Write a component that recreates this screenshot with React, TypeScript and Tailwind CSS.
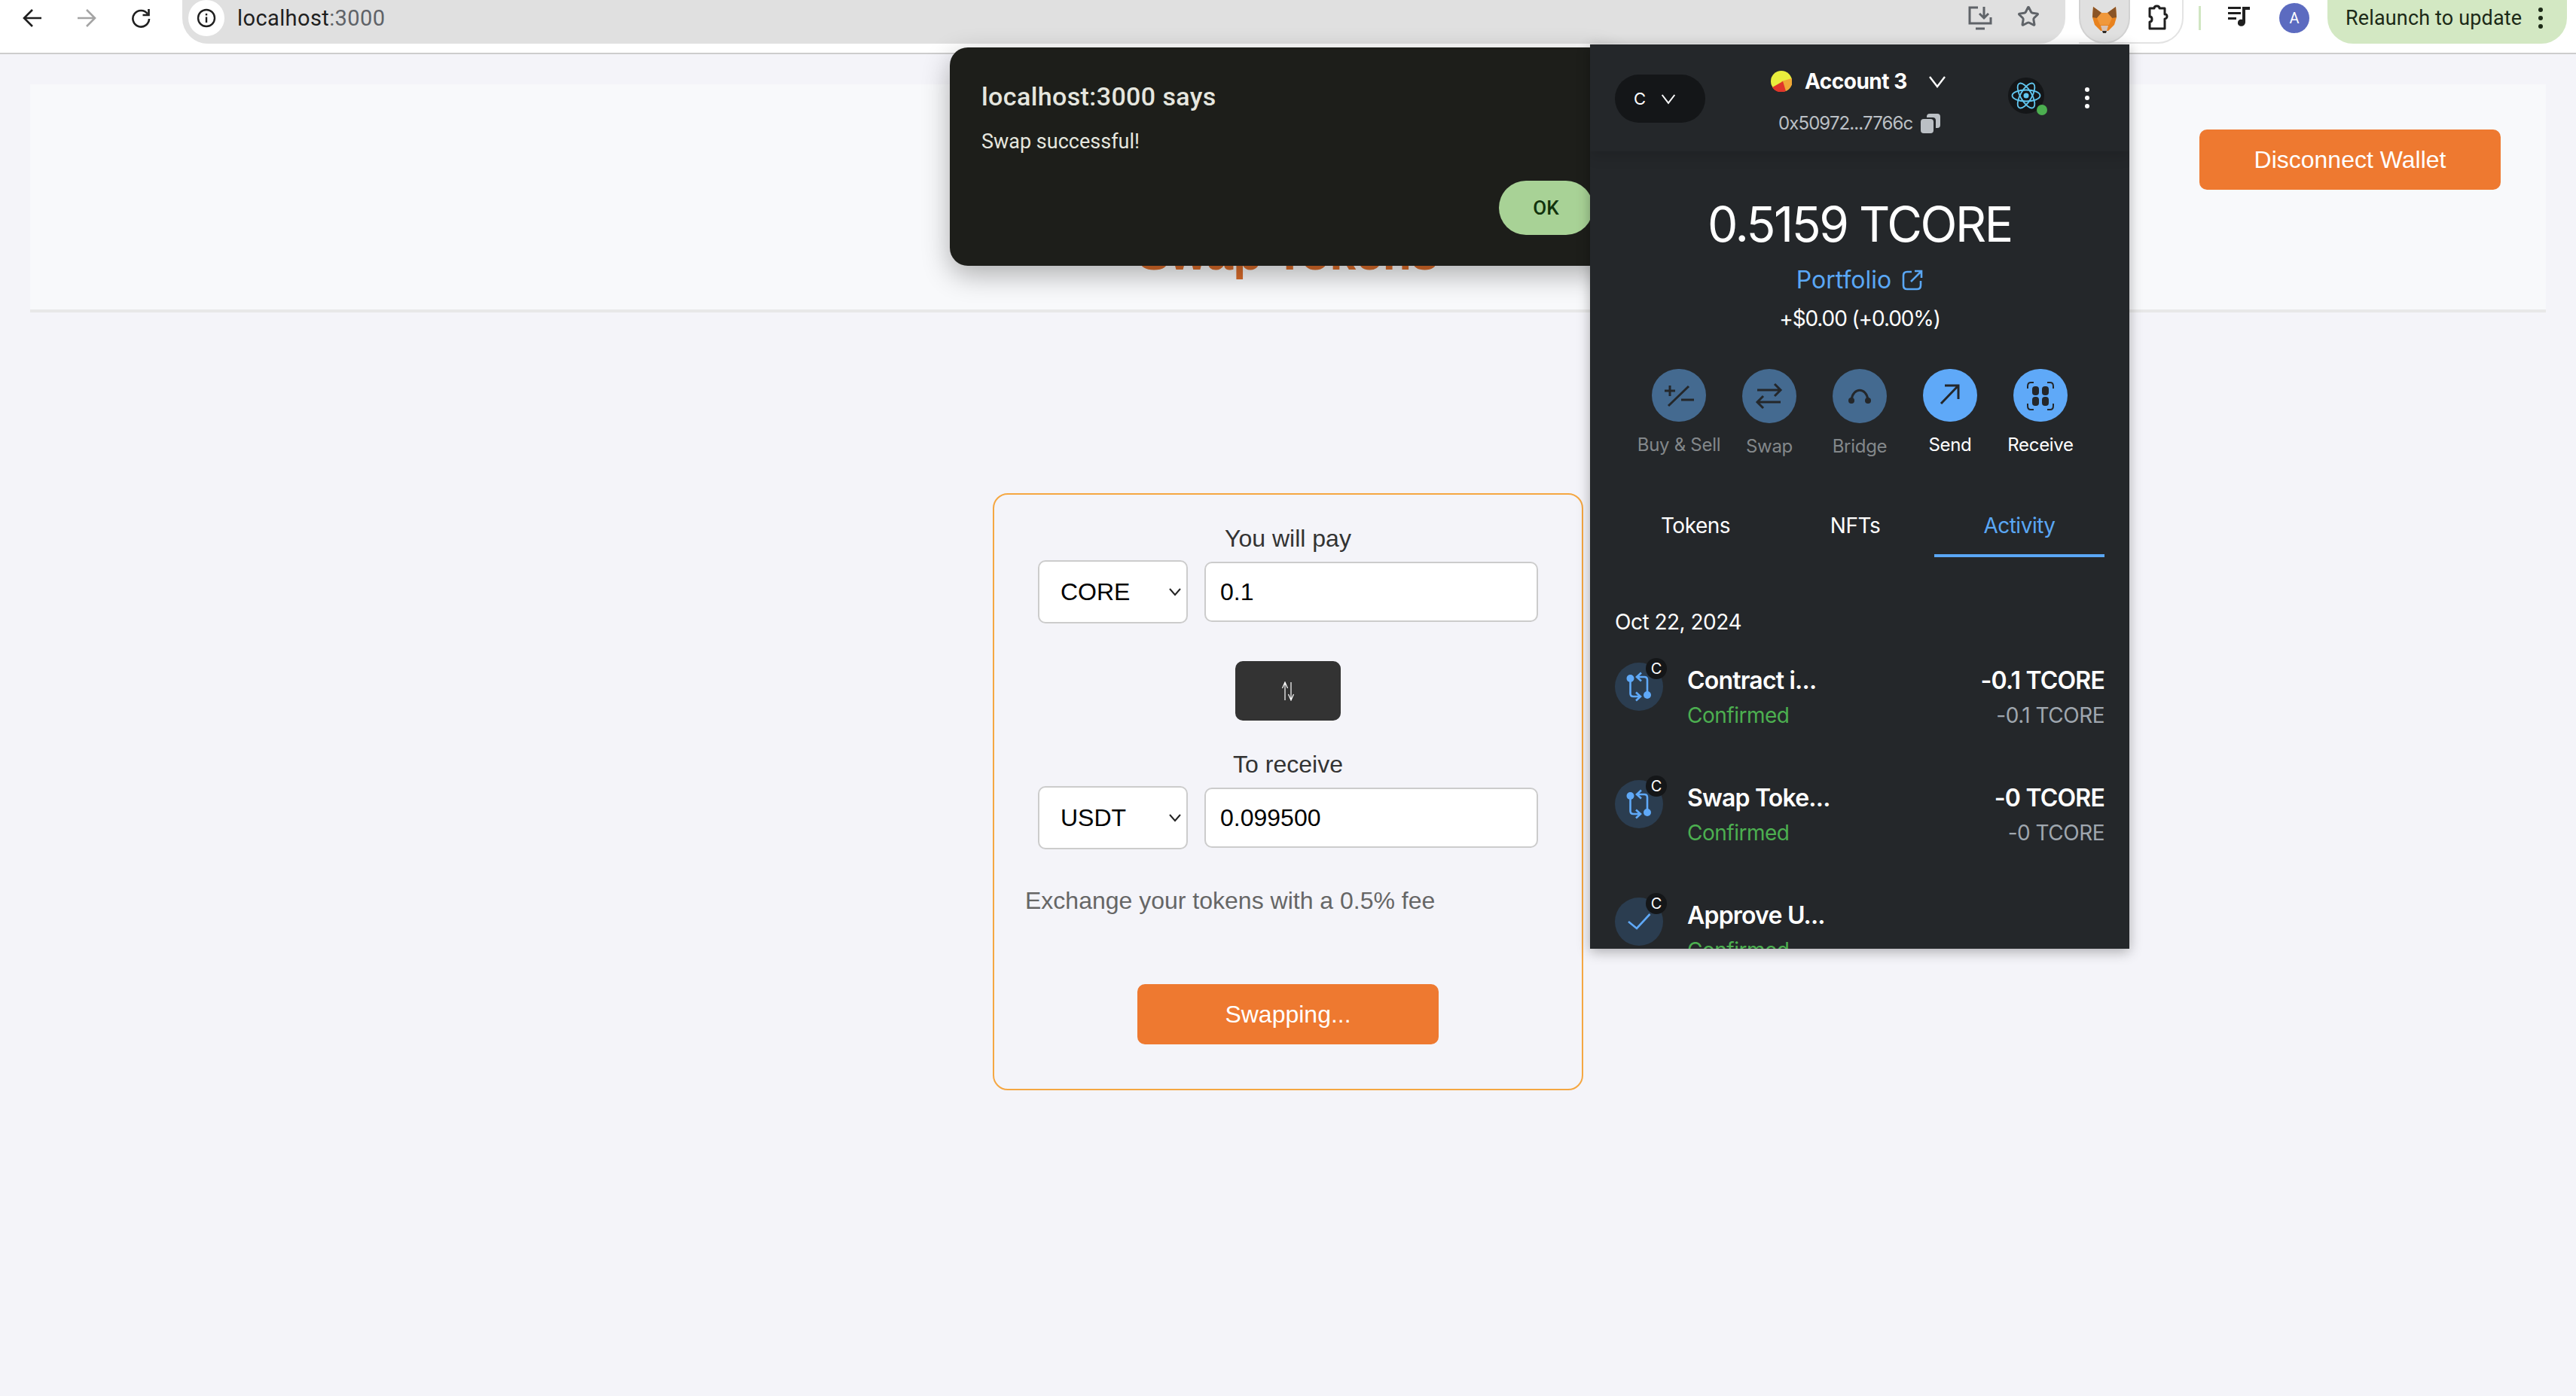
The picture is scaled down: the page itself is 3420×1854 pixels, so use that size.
import { Star } from "lucide-react";

const mmFont = "font-['Inter','Liberation_Sans',sans-serif]";

function BackIcon({ color }: { color: string }) {
  return (
    <svg width="28" height="28" viewBox="0 0 28 28" fill="none" stroke={color} strokeWidth="2.6">
      <path d="M26 14H4M14 3 3 14l11 11" />
    </svg>
  );
}

function ChromeBar() {
  return (
    <div className="h-[72px] shrink-0 border-b-2 border-[#cdcdcd] bg-white flex items-start overflow-hidden font-['Roboto',sans-serif]">
      <div className="flex items-center h-[48px] pl-[29px] gap-[44px] w-[242px]">
        <BackIcon color="#1f1f1f" />
        <div className="rotate-180">
          <BackIcon color="#a4a4a4" />
        </div>
        <svg width="28" height="28" viewBox="0 0 28 28" fill="none" stroke="#1f1f1f" strokeWidth="2.6">
          <path d="M23 8.5A10.8 10.8 0 1 0 25 15" />
          <path d="M24.5 2v8h-8" />
        </svg>
      </div>
      <div className="w-[500px] flex-none h-[58px] rounded-bl-[34px] bg-[#e0e0e0] flex items-start pl-[8px]">
        <div className="w-[48px] h-[48px] rounded-full bg-white flex items-center justify-center">
          <svg width="26" height="26" viewBox="0 0 26 26" fill="none" stroke="#1f1f1f" strokeWidth="2.4">
            <circle cx="13" cy="13" r="11" />
            <path d="M13 11.5V19M13 7v2.6" />
          </svg>
        </div>
        <span className="ml-[17px] text-[29px] leading-[48px] text-[#1f1f1f] tracking-[0.4px]">
          localhost<span className="text-[#5f6368]">:3000</span>
        </span>
      </div>
      <div className="w-[2000px] flex-none h-[58px] rounded-br-[34px] bg-[#e0e0e0] flex items-start justify-end pt-[7px] pr-[34px] gap-[32px]">
        <svg width="34" height="34" viewBox="0 0 34 34" fill="none" stroke="#5f6368" strokeWidth="3">
          <path d="M14 3H3v21h28v-8M11 31h12" />
          <path d="M22 2v15M16 11l6 6 6-6" />
        </svg>
        <Star size={30} strokeWidth={2.4} color="#5f6368" />
      </div>
      <div className="ml-[18px] h-[58px] w-[139px] rounded-br-[34px] border-b-2 border-r-2 border-[#e3e3e3] flex items-start">
        <div className="w-[68px] h-[58px] rounded-b-[34px] bg-[#e0e0e0] border-b-2 border-x-2 border-[#d2d2d2] flex items-start justify-center">
          <svg width="34" height="38" viewBox="0 0 34 38" className="mt-[8px]">
            <path d="M2 1 13 9h8l11-8 1 14-3 10-8 8h-10l-8-8-3-10z" fill="#e8821e" />
            <path d="M2 1 13 9l-6 7-6-1zM32 1 21 9l6 7 6-1z" fill="#8a5426" />
            <path d="M7 16l6-7h8l6 7-4 9H11z" fill="#f0983b" />
            <path d="M12 26h10l-2 7h-6z" fill="#d7c1b3" />
            <path d="M14 33h6l-1 3h-4z" fill="#2f2a26" />
          </svg>
        </div>
        <svg width="32" height="34" viewBox="0 0 32 34" fill="none" stroke="#1f1f1f" strokeWidth="3" className="ml-[22px] mt-[6px]">
          <path d="M4 5h6c0-4 7-4 7 0h7v8c4-1 4 6 0 6v13H4v-9c4 0 4-7 0-7z" strokeLinejoin="round" />
        </svg>
      </div>
      <div className="ml-[20px] mt-[8px] w-[3px] h-[32px] bg-[#d0e6c2]" />
      <svg width="32" height="32" viewBox="0 0 32 32" className="ml-[35px] mt-[6px]" fill="#1f1f1f">
        <path d="M1 3h17v3H1zM1 10h17v3H1zM1 17h11v3H1zM20 3h10v4h-6v16c0 8-11 7-10 1 0-4 4-5 6-4z" />
      </svg>
      <div className="ml-[37px] mt-[4px] w-[40px] h-[40px] rounded-full bg-[#5c6bc0] text-white text-[20px] flex items-center justify-center">A</div>
      <div className="ml-[24px] w-[318px] h-[58px] rounded-b-[34px] bg-[#d3e8c3] flex items-start pl-[24px] text-[27px] leading-[48px] text-[#1c2a17] tracking-[0.15px]">
        <span>Relaunch to update</span>
        <span className="ml-[22px] mt-[10px] flex flex-col gap-[5px]">
          <i className="block w-[6px] h-[6px] rounded-full bg-[#1c2a17]" />
          <i className="block w-[6px] h-[6px] rounded-full bg-[#1c2a17]" />
          <i className="block w-[6px] h-[6px] rounded-full bg-[#1c2a17]" />
        </span>
      </div>
    </div>
  );
}

function TokenRow({ token, value, selectMargin }: { token: string; value: string; selectMargin: string }) {
  return (
    <div className={`flex items-center gap-[22px] ${selectMargin}`}>
      <div className="relative">
        <select
          defaultValue={token}
          className="appearance-none w-[199px] h-[84px] pl-[28px] rounded-[10px] border-2 border-[#cccccc] bg-white text-[32px] text-black outline-none"
        >
          <option>{token}</option>
        </select>
        <svg width="18" height="12" viewBox="0 0 18 12" fill="none" stroke="#222" strokeWidth="2" className="absolute right-[8px] top-[36px]">
          <path d="M2 2l7 8 7-8" />
        </svg>
      </div>
      <input
        readOnly
        value={value}
        className="w-[443px] h-[80px] pl-[19px] rounded-[10px] border-2 border-[#cccccc] bg-white text-[32px] text-black outline-none"
      />
    </div>
  );
}

function SwapCard() {
  return (
    <div className="mx-auto mt-[240px] w-[784px] h-[793px] rounded-[20px] border-2 border-[#f5a742] pt-[40px] flex flex-col items-center">
      <label className="text-[32px] leading-[36px] text-[#333]">You will pay</label>
      <TokenRow token="CORE" value="0.1" selectMargin="mt-[11px]" />
      <button className="mt-[50px] w-[140px] h-[79px] rounded-[10px] bg-[#333] text-white flex items-center justify-center">
        <svg width="18" height="26" viewBox="0 0 18 26" fill="none" stroke="#fff" strokeWidth="1.2">
          <path d="M5 25V2M1.5 9 5 1l3.500 8M13 1v23M9.500 17 13 25l3.500-8" />
        </svg>
      </button>
      <label className="mt-[40px] text-[32px] leading-[36px] text-[#333]">To receive</label>
      <TokenRow token="USDT" value="0.099500" selectMargin="mt-[11px]" />
      <p className="mt-[50px] self-start pl-[41px] text-[32px] leading-[36px] text-[#666]">Exchange your tokens with a 0.5% fee</p>
      <button className="mt-[93px] w-[400px] h-[80px] rounded-[10px] bg-[#ee7930] text-white text-[32px]">Swapping...</button>
    </div>
  );
}

function AlertDialog() {
  return (
    <div className="absolute left-[1261px] top-[63px] w-[880px] h-[290px] rounded-[24px] bg-[#1d1e1a] shadow-[0_12px_36px_rgba(0,0,0,0.3)] pt-[45px] pl-[42px] pr-[26px] font-['Roboto',sans-serif]">
      <div className="text-[34px] leading-[40px] font-medium tracking-[0.4px] text-[#e5e6df]">localhost:3000 says</div>
      <div className="mt-[24px] text-[27px] leading-[32px] text-[#e5e6df]">Swap successful!</div>
      <div className="mt-[36px] flex justify-end">
        <button className="w-[125px] h-[72px] rounded-full bg-[#a8d296] text-[26px] font-medium text-[#12330d]">OK</button>
      </div>
    </div>
  );
}

function Chevron({ size, color }: { size: number; color: string }) {
  return (
    <svg width={size} height={size} viewBox="0 0 24 24" fill="none" stroke={color} strokeWidth="2.4">
      <path d="M2 6l10 13L22 6" />
    </svg>
  );
}

const actions = [
  {
    label: "Buy & Sell",
    tall: false,
    icon: <path d="M24 22v14M17 29h14M49 23 22 49M39 41h17" />,
  },
  {
    label: "Swap",
    tall: true,
    icon: <path d="M20 28h31M43 20l8 8-8 8M51 44H20M28 36l-8 8 8 8" />,
  },
  {
    label: "Bridge",
    tall: true,
    icon: null,
  },
  {
    label: "Send",
    tall: false,
    icon: <path d="M24 46 47 22M29 22h18v18" />,
  },
  {
    label: "Receive",
    tall: false,
    icon: null,
  },
];

function ActionButton({ index }: { index: number }) {
  const a = actions[index];
  const dim = index < 3;
  return (
    <div className="w-[120px] flex flex-col items-center">
      <div className={`w-[72px] ${a.tall ? "h-[72px]" : "h-[70px]"} rounded-full ${dim ? "bg-[#446a90]" : "bg-[#5fa9f8]"}`}>
        <svg width="72" height="72" viewBox="0 0 72 72" fill="none" stroke="#24272a" strokeWidth="3">
          {a.icon}
          {a.label === "Bridge" && (
            <>
              <path d="M25 41c2-17 20-17 22 0" />
              <circle cx="25" cy="42" r="4" fill="#24272a" stroke="none" />
              <circle cx="47" cy="42" r="4" fill="#24272a" stroke="none" />
            </>
          )}
          {a.label === "Receive" && (
            <>
              <rect x="25" y="23" width="9" height="12" rx="4" fill="#24272a" stroke="none" />
              <rect x="38" y="23" width="9" height="12" rx="4" fill="#24272a" stroke="none" />
              <rect x="25" y="37" width="9" height="12" rx="4" fill="#24272a" stroke="none" />
              <rect x="38" y="37" width="9" height="12" rx="4" fill="#24272a" stroke="none" />
              <path d="M27 18h-4q-4 0-4 5v3M45 18h4q4 0 4 5v3M27 54h-4q-4 0-4-5v-3M45 54h4q4 0 4-5v-3" strokeWidth="2" />
            </>
          )}
        </svg>
      </div>
      <div className={`mt-[15px] text-[24px] leading-[32px] tracking-[-0.3px] ${dim ? "text-[#83878a]" : "text-white"}`}>{a.label}</div>
    </div>
  );
}

function TxIcon({ kind }: { kind: "swap" | "check" }) {
  return (
    <div className="relative w-[64px] h-[64px] shrink-0 rounded-full bg-[#2b3d50]">
      <svg width="64" height="64" viewBox="0 0 64 64" fill="none" stroke="#5fa9f8" strokeWidth="2.6">
        {kind === "swap" ? (
          <>
            <circle cx="20.500" cy="21" r="5" fill="#5fa9f8" stroke="none" />
            <circle cx="43" cy="43" r="5" fill="#5fa9f8" stroke="none" />
            <path d="M20.500 24v17q0 4 4 4h9M28 39.500l6 5.500-6 5.500" />
            <path d="M43 40V23q0-4-4-4h-10M35 13.500 29 19l6 5.500" />
          </>
        ) : (
          <path d="M18 32l11 9 17.500-19" />
        )}
      </svg>
      <div className="absolute -right-[5px] -top-[6px] w-[28px] h-[28px] rounded-full bg-[#141618] text-white text-[20px] flex items-center justify-center">C</div>
    </div>
  );
}

function TxRow({ kind, title, amount }: { kind: "swap" | "check"; title: string; amount?: string }) {
  return (
    <div className="h-[156px] shrink-0 px-[33px] flex items-start">
      <TxIcon kind={kind} />
      <div className="ml-[32px] mt-[4px] flex-1">
        <div className="flex justify-between text-[32px] leading-[40px] font-semibold text-white tracking-[-0.8px]">
          <span>{title}</span>
          <span>{amount}</span>
        </div>
        <div className="mt-[8px] flex justify-between text-[28px] leading-[36px] tracking-[-0.5px]">
          <span className="text-[#4caf50]">Confirmed</span>
          <span className="text-[#9fa6ae]">{amount}</span>
        </div>
      </div>
    </div>
  );
}

function WalletPopup() {
  return (
    <div className={`absolute left-[2111px] top-[59px] w-[716px] h-[1201px] overflow-hidden bg-[#24272a] text-white shadow-[0_4px_16px_rgba(0,0,0,0.3)] flex flex-col ${mmFont}`}>
      <div className="h-[142px] shrink-0 flex items-start pl-[33px] shadow-[0_8px_16px_rgba(0,0,0,0.12)]">
        <div className="mt-[40px] w-[120px] h-[64px] rounded-full bg-[#141618] flex items-center pl-[25px] gap-[20px] text-[22px]">
          <span>C</span>
          <Chevron size={20} color="#fff" />
        </div>
        <div className="ml-[87px] mt-[29px] w-[240px]">
          <div className="flex items-center h-[40px]">
            <svg width="28" height="28" viewBox="0 0 28 28">
              <circle cx="14" cy="14" r="14" fill="#e9ee3d" />
              <path d="M14 14l14-4a14 14 0 0 1-8 17z" fill="#efa836" />
              <path d="M2 22a14 14 0 0 0 18 5l-4-13z" fill="#e0352a" />
            </svg>
            <span className="ml-[17px] text-[28px] font-bold tracking-[-0.5px]">Account 3</span>
            <span className="ml-[28px]">
              <Chevron size={24} color="#fff" />
            </span>
          </div>
          <div className="mt-[20px] flex items-center pl-[10px] text-[24px] leading-[32px] text-[#bbc0c5] tracking-[-0.9px]">
            <span>0x50972...7766c</span>
            <svg width="26" height="26" viewBox="0 0 26 26" fill="#bbc0c5" className="ml-[11px]">
              <rect x="0" y="7" width="17" height="19" rx="4" />
              <path d="M8 5V4q0-4 4-4h10q4 0 4 4v11q0 4-4 4h-2V9q0-4-4-4z" />
            </svg>
          </div>
        </div>
        <div className="relative ml-[75px] mt-[44px] w-[48px] h-[48px] rounded-full bg-[#141618] flex items-center justify-center">
          <svg width="40" height="44" viewBox="-20 -22 40 44" fill="none" stroke="#61c7f0" strokeWidth="1.8">
            <ellipse rx="18.500" ry="7.500" />
            <ellipse rx="18.500" ry="7.500" transform="rotate(60)" />
            <ellipse rx="18.500" ry="7.500" transform="rotate(120)" />
            <circle r="3.500" fill="#61c7f0" stroke="none" />
          </svg>
          <div className="absolute right-[-4px] bottom-[-2px] w-[14px] h-[14px] rounded-full bg-[#4caf50]" />
        </div>
        <div className="ml-[54px] mt-[57px] flex flex-col gap-[5px]">
          <i className="block w-[6px] h-[6px] rounded-full bg-white" />
          <i className="block w-[6px] h-[6px] rounded-full bg-white" />
          <i className="block w-[6px] h-[6px] rounded-full bg-white" />
        </div>
      </div>

      <div className="pt-[59px] flex flex-col items-center">
        <div className="text-[64px] leading-[76px] tracking-[-2.4px]">0.5159 TCORE</div>
        <div className="mt-[16px] flex items-center text-[32px] leading-[40px] text-[#5aa7f5]">
          <span>Portfolio</span>
          <svg width="28" height="28" viewBox="0 0 28 28" fill="none" stroke="#5aa7f5" strokeWidth="2.600" className="ml-[14px]">
            <path d="M13 3H7Q2 3 2 8v13q0 5 5 5h13q5 0 5-5v-6M12 16 26 2M17 2h9v9" />
          </svg>
        </div>
        <div className="mt-[13px] text-[28px] leading-[36px] tracking-[-1.1px]">+$0.00 (+0.00%)</div>
      </div>

      <div className="mt-[49px] flex justify-center items-start">
        {actions.map((a, i) => (
          <ActionButton key={a.label} index={i} />
        ))}
      </div>

      <div className="mt-[71px] px-[33px] flex text-[28px] leading-[36px] text-center tracking-[-0.5px]">
        <div className="w-[214px] pb-[20px]">Tokens</div>
        <div className="w-[210px] pb-[20px]">NFTs</div>
        <div className="w-[226px] pb-[20px] border-b-4 border-[#5aa7f5] text-[#5aa7f5]">Activity</div>
      </div>

      <div className="mt-[68px] px-[33px] text-[28px] leading-[36px] tracking-[-0.5px]">Oct 22, 2024</div>
      <div className="mt-[36px] flex flex-col">
        <TxRow kind="swap" title="Contract i..." amount="-0.1 TCORE" />
        <TxRow kind="swap" title="Swap Toke..." amount="-0 TCORE" />
        <TxRow kind="check" title="Approve U..." />
      </div>
    </div>
  );
}

export default function App() {
  return (
    <div className="relative w-[3420px] h-[1854px] overflow-hidden bg-[#f4f4f9] font-['Liberation_Sans',Arial,sans-serif]">
      <ChromeBar />
      <div className="mx-[40px] mt-[40px] h-[303px] bg-[#f8f9fb] border-b-4 border-[#e8e8e8] pt-[60px]">
        <div className="flex justify-end pr-[60px]">
          <button className="w-[400px] h-[80px] rounded-[10px] bg-[#ee7930] text-white text-[32px]">Disconnect Wallet</button>
        </div>
        <h1 className="mt-[48px] text-center text-[63px] leading-[72px] font-bold text-[#d96b2a]">Swap Tokens</h1>
      </div>
      <SwapCard />
      <AlertDialog />
      <WalletPopup />
    </div>
  );
}
